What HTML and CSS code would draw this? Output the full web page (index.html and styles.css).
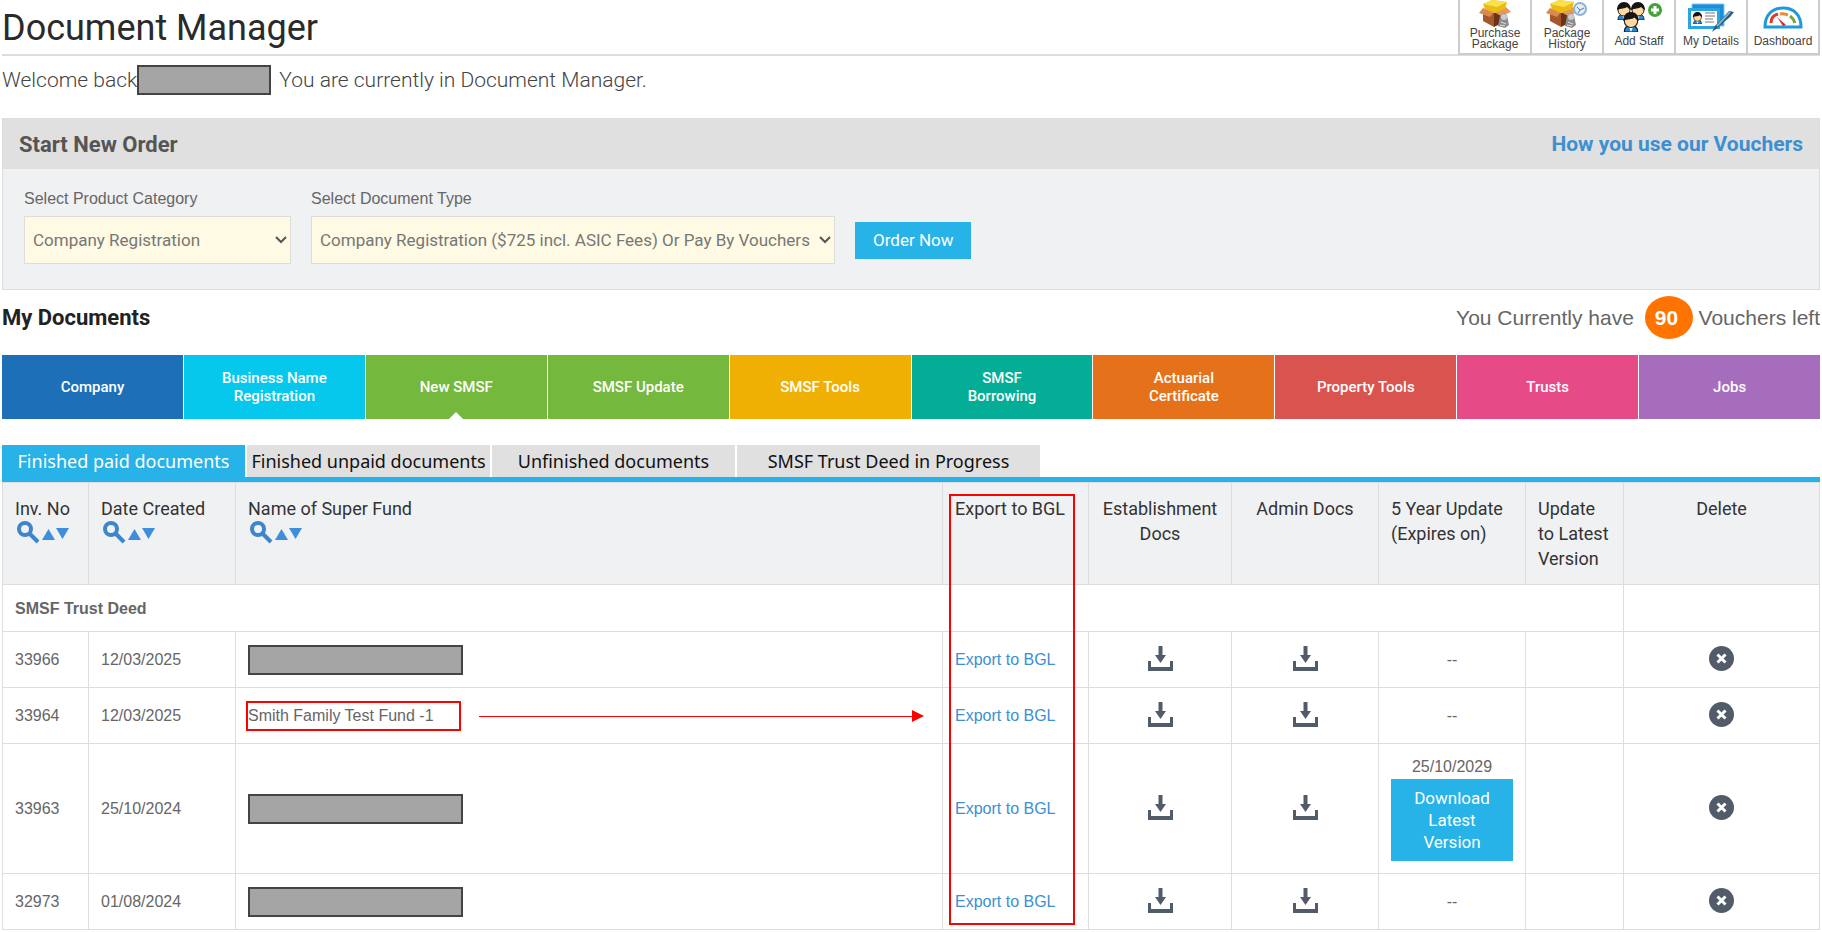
FILE: index.html
```
<!DOCTYPE html>
<html lang="en">
<head>
    <meta charset="UTF-8">
    <meta name="viewport" content="width=device-width, initial-scale=1.0">
    <title>Document Manager</title>
    <link rel="stylesheet" href="styles.css">
</head>
<body>
    <!-- shared icons -->
    <svg class="sprite" aria-hidden="true">
        <symbol id="download" viewBox="0 0 25 25">
            <path d="M10.500 0h4v9h3.500l-5.500 8L7 9h3.500z"/>
            <path d="M0 15h3v6h19v-6h3v10H0z"/>
        </symbol>
        <symbol id="remove" viewBox="0 0 25 25">
            <circle cx="12.500" cy="12.500" r="12.500"/>
            <path d="M8.500 8.500l8 8M16.500 8.500l-8 8" stroke="#fff" stroke-width="3"/>
        </symbol>
        <symbol id="sort" viewBox="0 0 54 24">
            <circle cx="8" cy="8" r="6" fill="none" stroke="#3d86cc" stroke-width="4"/>
            <path d="M13 13l8 8" stroke="#3d86cc" stroke-width="4"/>
            <path d="M25 19h13l-6.500-11zM39 7h13l-6.500 11z" fill="#3f8edb"/>
        </symbol>
        <symbol id="box" viewBox="0 0 32 28">
            <path d="M4 9l11 4v14L4 21z" fill="#a3572a"/>
            <path d="M15 13l12-4v12l-12 6z" fill="#6b3217"/>
            <path d="M4 8L0 13l11 4 4-5z" fill="#d98a50"/>
            <path d="M27 7l5 5-10 4-7-4z" fill="#e09a60"/>
            <path d="M4 4l9-4 15 2-2 7-11 4-9-4z" fill="#e9bd14"/>
            <path d="M4 4l9-4 15 2-10 5z" fill="#fbe04a"/>
            <path d="M21 16l4-3 3 2 2 10-4 3-7-2z" fill="#8d8d8d"/>
            <circle cx="25" cy="17" r="3" fill="#ccc"/>
            <path d="M22 22l5 2M21 25l5 1" stroke="#ddd"/>
        </symbol>
        <symbol id="person" viewBox="0 0 16 18">
            <path d="M2 18c0-4 2-6 6-6s6 2 6 6z" fill="#2389d7" stroke="#14212c"/>
            <path d="M6 13l2 5 2-5z" fill="#fff"/>
            <circle cx="8" cy="8" r="6" fill="#ffd9a0" stroke="#222"/>
            <path d="M1 8C1 3 4 0 8 0s7 3 7 8c-2-1-3-2-4-3-2 2-6 1-10 3z" fill="#151515"/>
        </symbol>
    </svg>

    <div class="header">
        <h1>Document Manager</h1>
        <div class="toolbar">
            <a href="#">
                <svg width="32" height="28"><use href="#box"/></svg>
                <span>Purchase<br>Package</span>
            </a>
            <a href="#">
                <svg width="42" height="28" viewBox="0 0 42 28">
                    <use href="#box" width="32" height="28"/>
                    <circle cx="34" cy="9" r="6" fill="#e4edf7" stroke="#8fb2d8" stroke-width="2"/>
                    <path d="M31 7l3 3 4-2M34 10l-2 3" stroke="#56799f" fill="none"/>
                </svg>
                <span>Package<br>History</span>
            </a>
            <a href="#">
                <svg width="48" height="32" viewBox="0 0 48 32">
                    <use href="#person" x="1" y="2" width="16" height="18"/>
                    <use href="#person" x="15" y="2" width="16" height="18"/>
                    <use href="#person" x="7" y="12" width="18" height="20"/>
                    <circle cx="40" cy="10" r="7" fill="#43a336"/>
                    <path d="M40 6v8M36 10h8" stroke="#fff" stroke-width="3"/>
                </svg>
                <span>Add Staff</span>
            </a>
            <a href="#">
                <svg width="46" height="32" viewBox="0 0 46 32">
                    <path d="M4 4h32v22H4z" fill="#1d8fd6" stroke="#7cc7ee"/>
                    <path d="M0 8h32v21H0z" fill="#2aa4e4"/>
                    <path d="M3 11h26v15H3z" fill="#fff"/>
                    <use href="#person" x="4" y="12" width="11" height="12"/>
                    <path d="M17 13h10M17 16h10M17 19h8M17 22h9" stroke="#777"/>
                    <path d="M24 32l3-6 14-15 5 1-4 5-14 12z" fill="#305a74"/>
                    <path d="M29 26l13-14" stroke="#6cb5d9" stroke-width="2"/>
                </svg>
                <span>My Details</span>
            </a>
            <a href="#">
                <svg width="40" height="32" viewBox="0 0 40 32">
                    <path d="M2 27C2 15 9 8 20 8s18 7 18 19z" fill="#fff" stroke="#1b9ade" stroke-width="3"/>
                    <path d="M8 23c0-5 3-8 7-9" fill="none" stroke="#e0382c" stroke-width="3"/>
                    <path d="M17 14c3-1 5 0 8 1" fill="none" stroke="#ef8a2c" stroke-width="3"/>
                    <path d="M27 16c3 2 4 4 5 7" fill="none" stroke="#7ba43a" stroke-width="3"/>
                    <path d="M14 17l9 8-3 1z" fill="#d02b20"/>
                </svg>
                <span>Dashboard</span>
            </a>
        </div>
    </div>

    <p class="welcome">Welcome back<span class="redacted"></span> You are currently in Document Manager.</p>

    <div class="order">
        <div class="order-head">
            <h2>Start New Order</h2>
            <a href="#">How you use our Vouchers</a>
        </div>
        <form class="order-form">
            <div class="field">
                <label for="category">Select Product Category</label>
                <div class="select">
                    <select id="category" class="category">
                        <option>Company Registration</option>
                    </select>
                    <svg width="12" height="8"><path d="M1 1l5 5 5-5"/></svg>
                </div>
            </div>
            <div class="field">
                <label for="doctype">Select Document Type</label>
                <div class="select">
                    <select id="doctype" class="doctype">
                        <option>Company Registration ($725 incl. ASIC Fees) Or Pay By Vouchers</option>
                    </select>
                    <svg width="12" height="8"><path d="M1 1l5 5 5-5"/></svg>
                </div>
            </div>
            <button type="button" class="btn">Order Now</button>
        </form>
    </div>

    <div class="docs-head">
        <h2>My Documents</h2>
        <p>You Currently have <b>90</b> Vouchers left</p>
    </div>

    <div class="products">
        <a href="#" class="company">Company</a>
        <a href="#" class="business">Business Name<br>Registration</a>
        <a href="#" class="smsf active">New SMSF</a>
        <a href="#" class="smsf">SMSF Update</a>
        <a href="#" class="tools">SMSF Tools</a>
        <a href="#" class="borrowing">SMSF<br>Borrowing</a>
        <a href="#" class="actuarial">Actuarial<br>Certificate</a>
        <a href="#" class="property">Property Tools</a>
        <a href="#" class="trusts">Trusts</a>
        <a href="#" class="jobs">Jobs</a>
    </div>

    <div class="tabs">
        <button type="button" class="active">Finished paid documents</button>
        <button type="button">Finished unpaid documents</button>
        <button type="button">Unfinished documents</button>
        <button type="button" class="wide">SMSF Trust Deed in Progress</button>
    </div>

    <table>
        <colgroup>
            <col class="c-inv"><col class="c-mid"><col><col class="c-export"><col class="c-est">
            <col class="c-mid"><col class="c-mid"><col class="c-update"><col class="c-delete">
        </colgroup>
        <thead>
            <tr>
                <th>Inv. No<svg class="sort" width="54" height="24"><use href="#sort"/></svg></th>
                <th>Date Created<svg class="sort" width="54" height="24"><use href="#sort"/></svg></th>
                <th>Name of Super Fund<svg class="sort" width="54" height="24"><use href="#sort"/></svg></th>
                <th class="export">Export to BGL<span class="highlight"></span></th>
                <th class="center">Establishment Docs</th>
                <th class="center">Admin Docs</th>
                <th>5 Year Update (Expires on)</th>
                <th>Update to Latest Version</th>
                <th class="center">Delete</th>
            </tr>
        </thead>
        <tbody>
            <tr class="group">
                <td colspan="8">SMSF Trust Deed</td>
                <td></td>
            </tr>
            <tr>
                <td>33966</td>
                <td>12/03/2025</td>
                <td><span class="redacted name"></span></td>
                <td><a href="#">Export to BGL</a></td>
                <td class="center"><svg class="icon"><use href="#download"/></svg></td>
                <td class="center"><svg class="icon"><use href="#download"/></svg></td>
                <td class="center">--</td>
                <td></td>
                <td class="center"><svg class="icon"><use href="#remove"/></svg></td>
            </tr>
            <tr>
                <td>33964</td>
                <td>12/03/2025</td>
                <td>
                    <div class="callout">
                        <span class="marked">Smith Family Test Fund -1</span>
                        <span class="arrow"></span>
                    </div>
                </td>
                <td><a href="#">Export to BGL</a></td>
                <td class="center"><svg class="icon"><use href="#download"/></svg></td>
                <td class="center"><svg class="icon"><use href="#download"/></svg></td>
                <td class="center">--</td>
                <td></td>
                <td class="center"><svg class="icon"><use href="#remove"/></svg></td>
            </tr>
            <tr>
                <td>33963</td>
                <td>25/10/2024</td>
                <td><span class="redacted name"></span></td>
                <td><a href="#">Export to BGL</a></td>
                <td class="center"><svg class="icon"><use href="#download"/></svg></td>
                <td class="center"><svg class="icon"><use href="#download"/></svg></td>
                <td class="center">25/10/2029<button type="button" class="btn latest">Download Latest Version</button></td>
                <td></td>
                <td class="center"><svg class="icon"><use href="#remove"/></svg></td>
            </tr>
            <tr>
                <td>32973</td>
                <td>01/08/2024</td>
                <td><span class="redacted name"></span></td>
                <td><a href="#">Export to BGL</a></td>
                <td class="center"><svg class="icon"><use href="#download"/></svg></td>
                <td class="center"><svg class="icon"><use href="#download"/></svg></td>
                <td class="center">--</td>
                <td></td>
                <td class="center"><svg class="icon"><use href="#remove"/></svg></td>
            </tr>
        </tbody>
    </table>
</body>
</html>
```
FILE: styles.css
```
* {
    box-sizing: border-box;
}

body {
    margin: 0 2px;
    font-family: Roboto, sans-serif;
    color: #666;
    background-color: #fff;
}

h1, h2, p {
    margin: 0;
}

a {
    color: #3c8fd0;
    text-decoration: none;
}

.sprite {
    display: none;
}

.header {
    display: flex;
    justify-content: space-between;
    height: 56px;
    border-bottom: 2px solid #ddd;
}

h1 {
    font-size: 36px;
    font-weight: 400;
    line-height: 56px;
    color: #2a2a2a;
}

.toolbar {
    display: flex;
    height: 55px;
    border-left: 2px solid #ccc;
}

.toolbar a {
    display: flex;
    flex-direction: column;
    align-items: center;
    width: 72px;
    padding-bottom: 3px;
    border-right: 2px solid #ccc;
    border-bottom: 2px solid #ccc;
    font: 12px/11px "Liberation Sans", sans-serif;
    color: #444;
    text-align: center;
}

.toolbar span {
    margin: auto 0;
}

.welcome {
    display: flex;
    align-items: center;
    gap: 8px;
    height: 47px;
    font-size: 21px;
    font-weight: 300;
    color: #444;
}

.redacted {
    display: block;
    width: 134px;
    height: 30px;
    background-color: #a5a5a5;
    border: 2px solid #444;
}

.welcome .redacted {
    margin-left: -8px;
}

.order {
    margin-top: 15px;
    border: 1px solid #ddd;
    background-color: #f0f1f3;
}

.order-head {
    display: flex;
    justify-content: space-between;
    align-items: center;
    height: 50px;
    padding: 0 16px;
    background-color: #e0e0e0;
}

h2 {
    font-size: 22px;
    font-weight: 700;
    color: #555;
}

.order-head a {
    font-size: 21px;
    font-weight: 700;
}

.order-form {
    display: flex;
    align-items: flex-end;
    gap: 20px;
    padding: 20px 21px 25px;
}

.field label {
    display: block;
    margin-bottom: 7px;
    font: 16px/20px "Liberation Sans", sans-serif;
}

.select {
    display: flex;
    align-items: center;
}

.select svg {
    margin: 0 4px 0 -16px;
    fill: none;
    stroke: #555;
    stroke-width: 2;
    pointer-events: none;
}

select {
    height: 48px;
    padding: 0 8px;
    border: 1px solid #ddd;
    border-radius: 0;
    background-color: #fffae3;
    font: 17px Roboto, sans-serif;
    color: #777;
    appearance: none;
}

.category {
    width: 267px;
}

.doctype {
    width: 524px;
}

.btn {
    padding: 0 18px;
    border: none;
    background-color: #27b2e8;
    font: 17px/37px Roboto, sans-serif;
    color: #fff;
    cursor: pointer;
}

.order-form .btn {
    margin-bottom: 5px;
}

.docs-head {
    display: flex;
    justify-content: space-between;
    align-items: center;
    height: 54px;
}

.docs-head h2 {
    color: #222;
}

.docs-head p {
    font: 21px "Liberation Sans", sans-serif;
}

.docs-head b {
    display: inline-block;
    width: 48px;
    margin-left: 5px;
    padding-left: 10px;
    border-radius: 50%;
    background-color: #ff7300;
    line-height: 43px;
    color: #fff;
}

.products {
    display: flex;
    gap: 1px;
    margin-top: 11px;
}

.products a {
    position: relative;
    display: flex;
    flex: 1;
    align-items: center;
    justify-content: center;
    height: 64px;
    font-size: 15px;
    font-weight: 500;
    line-height: 18px;
    color: #fff;
    text-align: center;
}

.company { background-color: #1d70b7; }
.business { background-color: #05c8ec; }
.smsf { background-color: #74b83e; }
.tools { background-color: #f0b003; }
.borrowing { background-color: #04ad95; }
.actuarial { background-color: #e6711b; }
.property { background-color: #d9534f; }
.trusts { background-color: #e64b87; }
.jobs { background-color: #a66dbd; }

.products .active::after {
    content: "";
    position: absolute;
    bottom: 0;
    border: 7px solid transparent;
    border-top: none;
    border-bottom-color: #fff;
}

.tabs {
    display: flex;
    gap: 2px;
    margin-top: 26px;
    border-bottom: 5px solid #27b2e8;
}

.tabs button {
    width: 243px;
    padding: 0;
    border: none;
    background-color: #e0e0e0;
    font: 18px/32px "Noto Sans", sans-serif;
    color: #111;
    white-space: nowrap;
}

.tabs .active {
    background-color: #27b2e8;
    color: #fff;
}

.tabs .wide {
    width: 303px;
}

table {
    width: 100%;
    table-layout: fixed;
    border-collapse: collapse;
    font: 16px/20px "Liberation Sans", sans-serif;
}

.c-inv { width: 86px; }
.c-mid { width: 147px; }
.c-export { width: 146px; }
.c-est { width: 143px; }
.c-update { width: 98px; }
.c-delete { width: 196px; }

th, td {
    padding: 13px 12px 12px;
    border: 1px solid #ddd;
    text-align: left;
}

th {
    height: 102px;
    padding-bottom: 0;
    background-color: #f0f1f3;
    font: 18px/25px Roboto, sans-serif;
    color: #333;
    vertical-align: top;
}

td {
    height: 56px;
}

.group td {
    height: 47px;
    font-weight: bold;
}

.center {
    text-align: center;
}

th.center {
    padding-left: 8px;
    padding-right: 8px;
}

.sort {
    display: block;
    margin-left: 2px;
}

.icon {
    display: inline-block;
    width: 25px;
    height: 25px;
    margin-bottom: 4px;
    fill: #525c68;
    vertical-align: middle;
}

.name {
    width: 215px;
}

.export {
    position: relative;
}

/* red frame round the whole export column */
.highlight {
    position: absolute;
    top: 11px;
    left: 6px;
    width: 126px;
    height: 431px;
    border: 2px solid #f00;
    pointer-events: none;
}

.callout {
    display: flex;
    align-items: center;
    gap: 18px;
    margin-left: -2px;
}

.marked {
    width: 215px;
    border: 2px solid #f00;
    line-height: 26px;
}

.arrow {
    display: flex;
    flex: 1;
    align-items: center;
    margin-right: 6px;
}

.arrow::before {
    content: "";
    flex: 1;
    height: 1px;
    background-color: #f00;
}

.arrow::after {
    content: "";
    border: 6px solid transparent;
    border-left: 12px solid #f00;
    border-right: none;
}

.latest {
    width: 100%;
    margin-top: 2px;
    padding: 8px 17px;
    line-height: 22px;
}
```
